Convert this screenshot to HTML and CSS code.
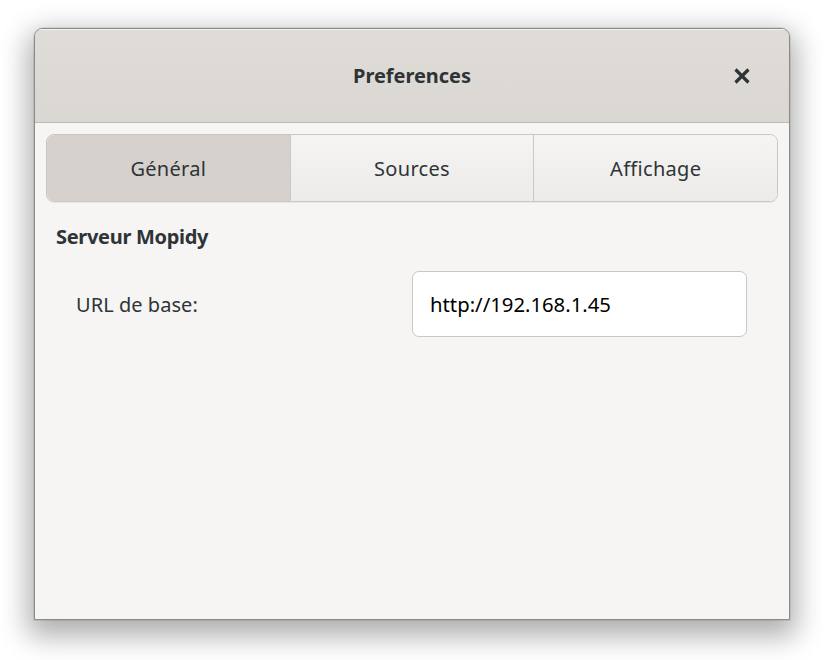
FILE: index.html
```html
<!DOCTYPE html>
<html>
<head>
<meta charset="utf-8">
<link rel="stylesheet" href="styles.css">
</head>
<body>
<div class="window">
  <div class="titlebar">
    <div class="title">Preferences</div>
    <div class="close">
      <svg width="18" height="18" viewBox="0 0 18 18"><path d="M2.5 2.5 L15.5 15.5 M15.5 2.5 L2.5 15.5" stroke="#2e3436" stroke-width="3.2" stroke-linecap="butt"/></svg>
    </div>
  </div>
  <div class="content">
    <div class="tabs">
      <div class="tab active">Général</div>
      <div class="tab">Sources</div>
      <div class="tab">Affichage</div>
    </div>
    <div class="section">Serveur Mopidy</div>
    <div class="row">
      <div class="label">URL de base:</div>
      <div class="entry">http://192.168.1.45</div>
    </div>
  </div>
</div>
</body>
</html>
```
FILE: styles.css
```css
html, body { margin: 0; padding: 0; background: #ffffff; }
body { width: 824px; height: 660px; overflow: hidden; font-family: "Noto Sans", "Open Sans", sans-serif; color: #2e3436; }
.window {
  margin: 28px 0 0 34px;
  width: 756px;
  height: 592px;
  border: 1px solid #8a8a88;
  border-radius: 9px 9px 0 0;
  background: #f6f5f4;
  box-shadow: 0 0 0 1px rgba(0,0,0,0.08), 0 10px 28px 6px rgba(0,0,0,0.32);
  display: flex;
  flex-direction: column;
  overflow: hidden;
  box-sizing: border-box;
}
.titlebar {
  height: 94px;
  flex: none;
  background: linear-gradient(#e0ddd9, #dad6d2);
  border-bottom: 1px solid #bfb8b1;
  box-shadow: inset 0 1px 0 #f3f1ef;
  display: flex;
  align-items: center;
  justify-content: center;
  position: relative;
  box-sizing: border-box;
}
.title { font-size: 20px; font-weight: bold; letter-spacing: -0.05px; }
.close { position: absolute; right: 38px; top: 38px; width: 18px; height: 18px; }
.close svg { display: block; }
.content { padding: 11px 11px 0 11px; }
.tabs {
  display: flex;
  height: 68px;
  border: 1px solid #cdc7c2;
  border-radius: 8px;
  overflow: hidden;
  box-sizing: border-box;
  box-shadow: 0 1px 1px rgba(0,0,0,0.06);
}
.tab {
  flex: 1;
  display: flex;
  align-items: center;
  justify-content: center;
  font-size: 20px;
  letter-spacing: 0.3px;
  background: linear-gradient(#f5f4f3, #edebe9);
  border-left: 1px solid #cdc7c2;
}
.tab:first-child { border-left: none; }
.tab.active { background: #d6d1cd; }
.section { font-weight: bold; font-size: 20px; letter-spacing: -0.3px; margin: 22px 0 0 10px; line-height: 26px; }
.row { display: flex; align-items: center; justify-content: space-between; margin: 21px 31px 0 30px; }
.label { font-size: 20px; letter-spacing: 0.05px; }
.entry {
  width: 335px;
  height: 66px;
  box-sizing: border-box;
  border: 1px solid #cdc7c2;
  border-radius: 7px;
  background: #ffffff;
  display: flex;
  align-items: center;
  padding-left: 17px;
  font-family: "Noto Sans", sans-serif;
  font-size: 20.3px;
  color: #000;
}
```
